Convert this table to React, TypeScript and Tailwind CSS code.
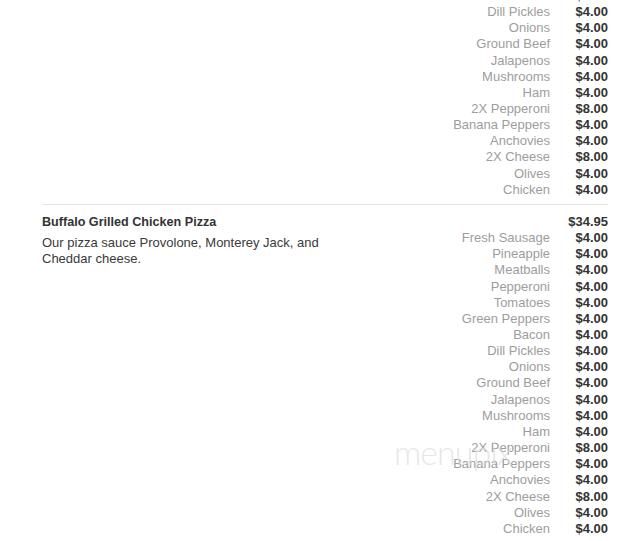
import React from 'react';

type Option = { name: string; price: string };

const toppings: Option[] = [
  { name: 'Fresh Sausage', price: '$4.00' },
  { name: 'Pineapple', price: '$4.00' },
  { name: 'Meatballs', price: '$4.00' },
  { name: 'Pepperoni', price: '$4.00' },
  { name: 'Tomatoes', price: '$4.00' },
  { name: 'Green Peppers', price: '$4.00' },
  { name: 'Bacon', price: '$4.00' },
  { name: 'Dill Pickles', price: '$4.00' },
  { name: 'Onions', price: '$4.00' },
  { name: 'Ground Beef', price: '$4.00' },
  { name: 'Jalapenos', price: '$4.00' },
  { name: 'Mushrooms', price: '$4.00' },
  { name: 'Ham', price: '$4.00' },
  { name: '2X Pepperoni', price: '$8.00' },
  { name: 'Banana Peppers', price: '$4.00' },
  { name: 'Anchovies', price: '$4.00' },
  { name: '2X Cheese', price: '$8.00' },
  { name: 'Olives', price: '$4.00' },
  { name: 'Chicken', price: '$4.00' },
];

function OptionRow({ name, price }: Option) {
  return (
    <div className="flex h-[16.17px] items-center">
      <span className="flex-1 text-right text-[#9d9d9d]">{name}</span>
      <span className="w-[58px] text-right font-bold text-[#333]">{price}</span>
    </div>
  );
}

function MenuItem(props: { title?: string; desc?: string; price?: string; options: Option[]; last?: boolean }) {
  return (
    <div className={props.last ? 'flex pt-[9px]' : 'flex border-b border-[#e6e6e6] pb-[6px]'}>
      <div className="flex-1">
        {props.title && (
          <>
            <div className="h-[16.17px] flex items-center font-bold text-[12.6px] text-[#333]">{props.title}</div>
            <p className="mt-[5px] w-[290px] leading-4 text-[#3a3a3a]">{props.desc}</p>
          </>
        )}
      </div>
      <div className="w-[200px]">
        {props.price && (
          <div className="flex h-[16.17px] items-center justify-end font-bold text-[#333]">{props.price}</div>
        )}
        {props.options.map((o, i) => (
          <OptionRow key={i} {...o} />
        ))}
      </div>
    </div>
  );
}

export default function App() {
  return (
    <div
      className="relative h-[541px] w-[628px] overflow-hidden bg-white pl-[42px] pr-[20px] text-[13px] leading-4"
      style={{ fontFamily: '"Liberation Sans", Arial, sans-serif' }}
    >
      <div className="-mt-[12.2px]">
        <MenuItem options={toppings.slice(6)} />
        <MenuItem
          last
          title="Buffalo Grilled Chicken Pizza"
          desc="Our pizza sauce Provolone, Monterey Jack, and Cheddar cheese."
          price="$34.95"
          options={toppings}
        />
      </div>
      {/* watermark */}
      <div
        className="pointer-events-none absolute left-[394px] top-[444px] text-[34px] font-light tracking-[-1px] text-[#dcdcdc]/70"
        style={{ fontFamily: 'Lato, sans-serif' }}
      >
        menupix
      </div>
    </div>
  );
}
